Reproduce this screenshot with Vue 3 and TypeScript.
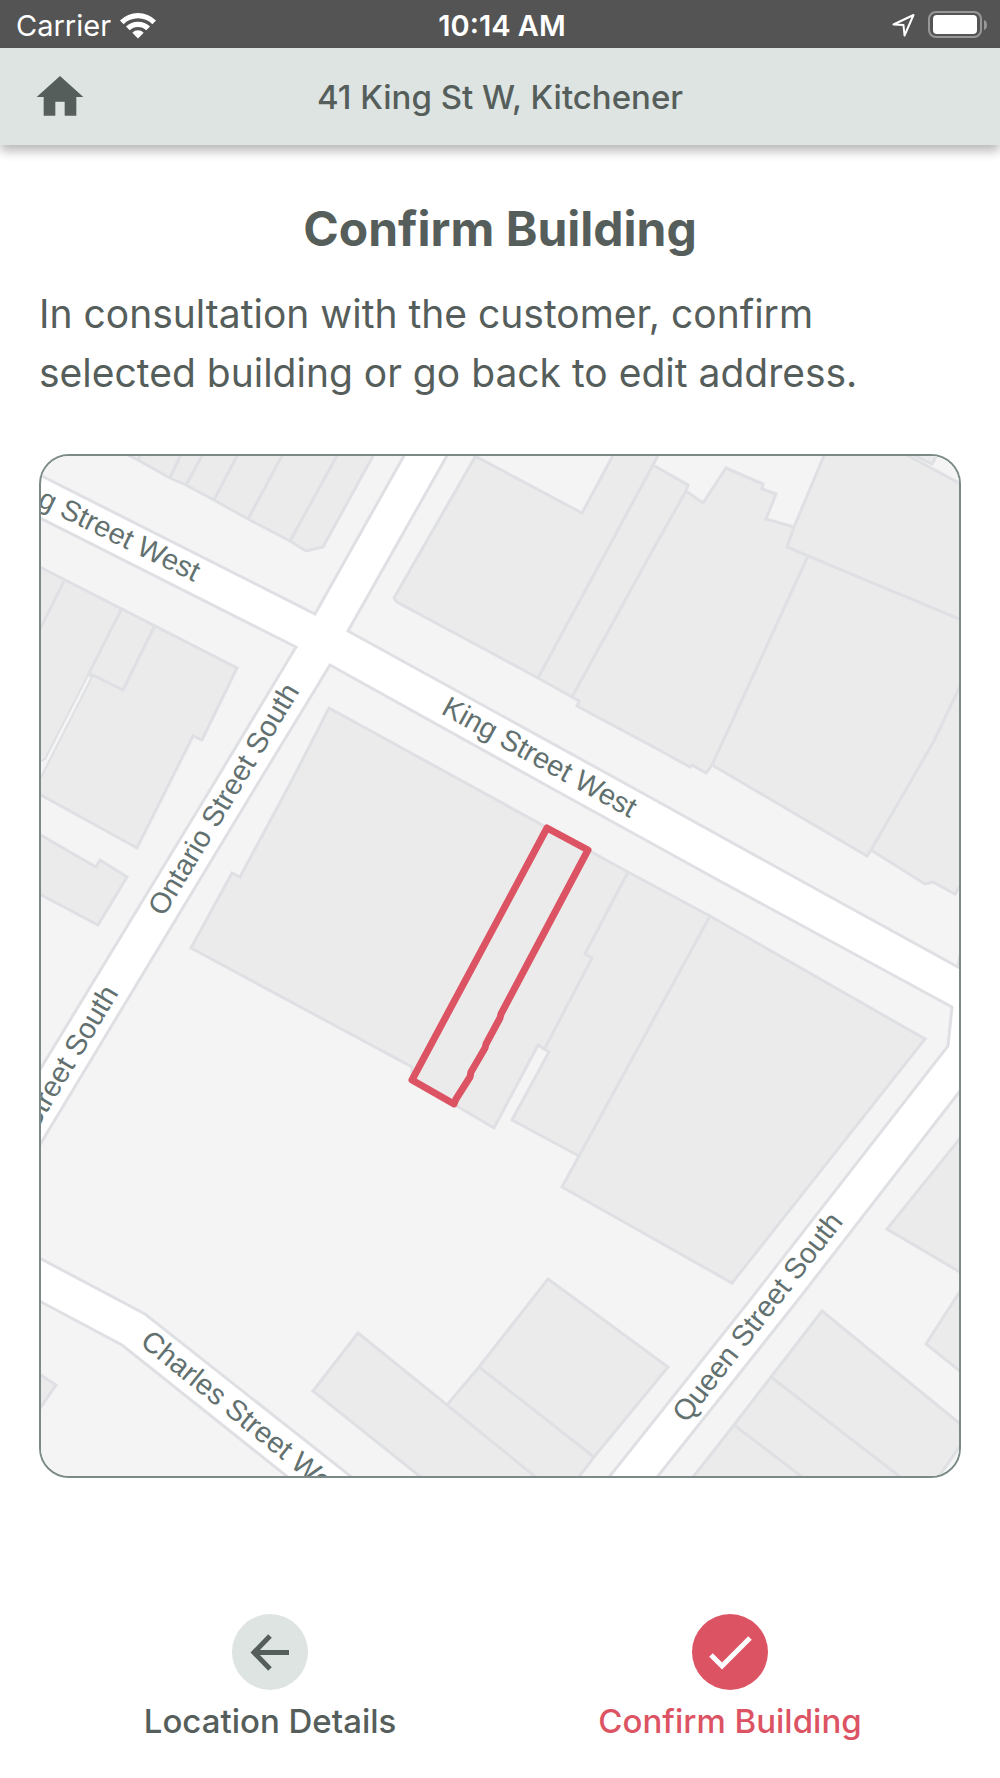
<script setup lang="ts">
interface StreetLabel {
  name: string
  x: number
  y: number
  angle: number
  anchor: 'start' | 'end'
}

const address = '41 King St W, Kitchener'

// City blocks; the white left between them forms the streets.
const blocks: string[] = [
  '30,470 315,614 410,445 30,445',
  '30,513 296,647 216,780 30,1086',
  '330,665 553,789 718,880 952,1007 948,1046 750,1300 602,1486 363,1486 145,1314 30,1253 30,1161 260,780',
  '453,445 348,631 637,790 836,900 958,967 970,900 970,445',
  '970,1078 798,1300 650,1486 970,1486',
  '30,1296 122,1345 299,1486 30,1486',
]

const buildings: string[] = [
  '110,446 138,460 170,478 186,485 214,500 248,519 290,541 306,551 323,547 379,445',
  '30,562 237,668 202,740 193,736 137,848 30,789',
  '30,829 96,867 100,860 127,877 98,925 30,889',
  '329,708 628,872 710,916 925,1039 732,1283 562,1187 579,1156 512,1120 549,1052 538,1045 494,1128 455,1105 412,1080 412,1067 191,948 232,873 240,877 292,780',
  '481,446 475,457 394,598 397,602 538,678 572,697 579,701 577,706 650,745 690,767 692,765 706,773 712,765 867,856 871,850 925,884 933,882 955,894 970,870 970,490 959,483 890,446 828,446 794,527 766,519 776,494 762,489 763,484 726,468 703,503 686,491 688,485 653,465 663,446 618,446 582,513 475,456',
  '895,446 932,464 942,446',
  '970,1126 887,1229 970,1278',
  '970,1276 926,1344 970,1379',
  '822,1311 959,1423 970,1432 932,1486 686,1486 734,1425 771,1377',
  '548,1279 668,1367 594,1457 572,1486 432,1486 313,1391 358,1333 447,1405 479,1367',
  '30,1368 56,1385 30,1423',
]

const partyWalls: string[] = [
  '138,460 141,454',
  '170,478 182,452',
  '186,485 204,452',
  '214,500 240,450',
  '248,519 284,452',
  '290,541 339,452',
  '64,581 38,633',
  '121,610 89,673 123,690 154,627',
  '628,872 585,954 592,958 545,1048',
  '710,916 579,1156',
  '538,678 653,465',
  '572,697 650,555 686,491',
  '712,765 808,556',
  '794,527 787,547 808,556 962,620',
  '871,850 934,741 962,682',
  '771,1377 908,1483',
  '734,1425 810,1483',
  '479,1367 594,1457',
  '447,1405 543,1483',
]

const alley = '88,675 92,677 36,787 36,764 45,759'
const selected =
  '547,828 588,850 501,1014 500,1018 486,1044 485,1048 471,1072 470,1077 456,1099 454,1104 412,1080'

const labels: StreetLabel[] = [
  { name: 'King Street West', x: 194, y: 582, angle: 26, anchor: 'end' },
  { name: 'King Street West', x: 440, y: 713, angle: 29, anchor: 'start' },
  { name: 'Ontario Street South', x: 300, y: 691, angle: -59, anchor: 'end' },
  { name: 'Ontario Street South', x: 119, y: 993, angle: -59, anchor: 'end' },
  { name: 'Queen Street South', x: 844, y: 1222, angle: -52, anchor: 'end' },
  { name: 'Charles Street West', x: 139, y: 1344, angle: 39, anchor: 'start' },
]
</script>

<template>
  <div class="screen">
    <div class="status">
      <div class="carrier">
        <span>Carrier</span>
        <svg width="38" height="28" viewBox="0 0 38 28" aria-hidden="true">
          <path d="M1 9.5a25.500 25.500 0 0 1 36 0l-3.600 3.700a20.500 20.500 0 0 0-28.800 0z" />
          <path d="M7 15.600a17 17 0 0 1 24 0l-3.700 3.700a11.800 11.800 0 0 0-16.600 0z" />
          <path d="M13.300 21.700a8.100 8.100 0 0 1 11.400 0L19 27.500z" />
        </svg>
      </div>
      <time class="clock">10:14 AM</time>
      <div class="indicators">
        <svg width="24" height="24" viewBox="0 0 24 24" aria-hidden="true">
          <path class="locate" d="M1.500 11.500 21.500 2 12.500 22.500l-1-10.500z" />
        </svg>
        <svg width="60" height="28" viewBox="0 0 60 28" aria-hidden="true">
          <rect class="battery-case" x="1" y="1" width="52" height="25" rx="7" />
          <rect x="5" y="4" width="44" height="19" rx="4" />
          <path class="battery-tip" d="M56 9c4 1 4 9 0 10z" />
        </svg>
      </div>
    </div>

    <header class="topbar">
      <button class="home" type="button" aria-label="Home">
        <svg width="56" height="56" viewBox="0 0 24 24" aria-hidden="true">
          <path d="M10 20v-6h4v6h5v-8h3L12 3 2 12h3v8z" />
        </svg>
      </button>
      <span class="address">{{ address }}</span>
    </header>

    <main class="content">
      <h1>Confirm Building</h1>
      <p>
        In consultation with the customer, confirm<br />
        selected building or go back to edit address.
      </p>

      <div class="map">
        <svg viewBox="41 456 918 1020" role="img" aria-label="Map of the selected building">
          <g class="blocks">
            <polygon v-for="shape in blocks" :key="shape" :points="shape" />
          </g>
          <g class="buildings">
            <polygon v-for="shape in buildings" :key="shape" :points="shape" />
            <polyline v-for="wall in partyWalls" :key="wall" :points="wall" />
            <polygon class="alley" :points="alley" />
          </g>
          <g class="labels">
            <text
              v-for="label in labels"
              :key="label.name + label.x"
              :text-anchor="label.anchor"
              :transform="`translate(${label.x} ${label.y}) rotate(${label.angle})`"
            >{{ label.name }}</text>
          </g>
          <polygon class="selected" :points="selected" />
        </svg>
      </div>
    </main>

    <footer class="actions">
      <button class="action" type="button">
        <span class="disc">
          <svg width="54" height="54" viewBox="0 0 54 54" aria-hidden="true">
            <path d="M27 11 11 27.500 27 44M11 27.500H46" />
          </svg>
        </span>
        <span>Location Details</span>
      </button>
      <button class="action primary" type="button">
        <span class="disc">
          <svg width="54" height="54" viewBox="0 0 54 54" aria-hidden="true">
            <path d="m8 30 11 11L47 13" />
          </svg>
        </span>
        <span>Confirm Building</span>
      </button>
    </footer>
  </div>
</template>

<style>
body {
  margin: 0;
  background: #fff;
}
</style>

<style scoped>
.screen {
  display: flex;
  flex-direction: column;
  min-height: 100vh;
  background: #fff;
  color: #555e5b;
  font-family: Inter, 'Liberation Sans', sans-serif;
}

button {
  padding: 0;
  border: 0;
  background: none;
  color: inherit;
  font: inherit;
  cursor: pointer;
}

svg {
  display: block;
}

.status {
  display: grid;
  grid-template-columns: 1fr auto 1fr;
  align-items: center;
  box-sizing: border-box;
  height: 48px;
  padding: 2px 12px 0 16px;
  background: #545454;
  color: #fff;
  fill: #fff;
  font-size: 29px;
}

.carrier,
.indicators {
  display: flex;
  align-items: center;
  gap: 8px;
}

.indicators {
  justify-content: flex-end;
  gap: 12px;
}

.clock {
  font-weight: 600;
}

.locate {
  fill: none;
  stroke: #fff;
  stroke-width: 2;
  stroke-linejoin: round;
}

.battery-case {
  fill: none;
  stroke: #989898;
  stroke-width: 2;
}

.battery-tip {
  fill: #989898;
}

.topbar {
  display: grid;
  grid-template-columns: 1fr auto 1fr;
  align-items: center;
  height: 97px;
  padding: 0 32px;
  background: #dee4e2;
  box-shadow: 0 6px 10px rgba(0, 0, 0, 0.28);
}

.home {
  justify-self: start;
  fill: #555e5b;
}

.address {
  font-size: 33px;
  font-weight: 500;
}

.content {
  padding: 56px 39px 0;
}

h1 {
  margin: 0;
  font-size: 48px;
  line-height: 56px;
  font-weight: 700;
  text-align: center;
}

p {
  margin: 27px 0 52px;
  font-size: 39px;
  line-height: 59px;
}

.map {
  overflow: hidden;
  border: 2px solid #7b8a86;
  border-radius: 30px;
  background: #fff;
}

.map svg {
  width: 100%;
  height: auto;
}

.blocks {
  fill: #f4f4f4;
  stroke: #dfe0e4;
  stroke-width: 3;
}

.buildings {
  fill: #ebebeb;
  stroke: #dfe0e4;
  stroke-width: 3;
}

.buildings polyline {
  fill: none;
}

.buildings .alley {
  fill: #f4f4f4;
  stroke-width: 2;
}

.labels {
  fill: #62716f;
  font-family: 'Liberation Sans', Arial, sans-serif;
  font-size: 29px;
}

.selected {
  fill: none;
  stroke: #dc5463;
  stroke-width: 7;
  stroke-linejoin: round;
}

.actions {
  display: grid;
  grid-template-columns: 1fr 1fr;
  margin-top: auto;
  padding: 40px 40px 35px;
}

.action {
  display: flex;
  flex-direction: column;
  align-items: center;
  gap: 9px;
  font-size: 33px;
  line-height: 44px;
  font-weight: 500;
}

.disc {
  display: grid;
  place-items: center;
  width: 76px;
  height: 76px;
  border-radius: 50%;
  background: #dee4e2;
}

.disc path {
  fill: none;
  stroke: currentColor;
  stroke-width: 5;
}

.primary {
  color: #dc5463;
}

.primary .disc {
  background: #dc5463;
  color: #fff;
}
</style>
